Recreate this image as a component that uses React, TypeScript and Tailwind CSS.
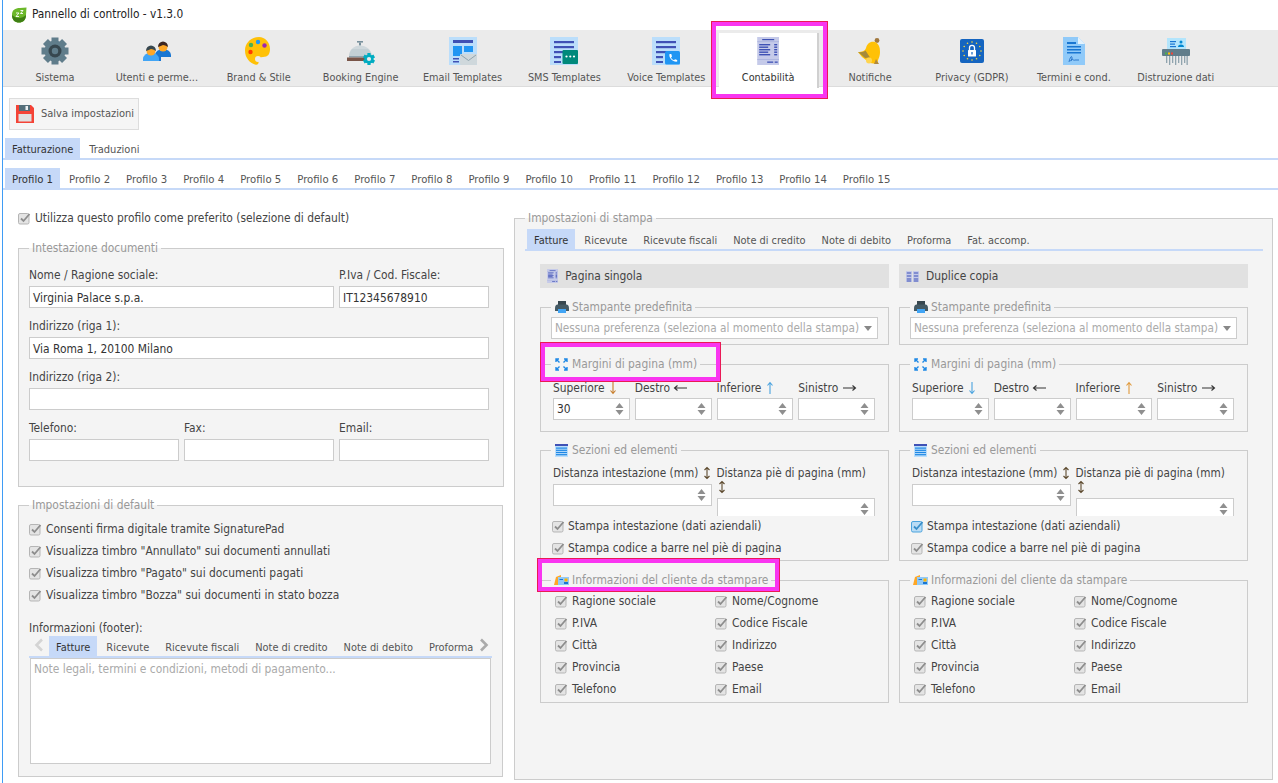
import React from "react";

const inputBox = "h-[22px] border border-[#ccc] bg-white px-[3px] leading-[22px] text-[#333]";

const Check: React.FC<{ blue?: boolean }> = ({ blue }) => (
  <svg width="13" height="13" viewBox="0 0 13 13" className="shrink-0">
    <rect x="0.5" y="1.5" width="10.5" height="10.5" rx="1.5" fill={blue ? "#b9dcf5" : "#e4e4e4"} stroke={blue ? "#4ba3dc" : "#b5b5b5"} />
    <path d="M3 6.5 L5.5 9 L11.5 2" fill="none" stroke={blue ? "#3a8fc9" : "#8d8d8d"} strokeWidth="1.8" />
  </svg>
);

const CheckRow: React.FC<{ label: string; blue?: boolean; gap?: string }> = ({ label, blue, gap = "gap-[4px]" }) => (
  <div className={`flex h-[22px] items-center ${gap} text-[#444]`}>
    <Check blue={blue} />
    <span className="whitespace-nowrap pt-[1px]">{label}</span>
  </div>
);

const Tabs: React.FC<{ items: string[]; className?: string }> = ({ items, className = "pl-[2px] text-[11px]" }) => (
  <div className={`flex h-[22px] gap-[2px] border-b-2 border-[#c6d9f8] ${className}`}>
    {items.map((t, i) => (
      <div key={t} className={`h-[20px] whitespace-nowrap px-[7px] pt-[1px] leading-[22px] ${i === 0 ? "bg-[#c6d9f8] text-[#333]" : "text-[#555]"}`}>
        {t}
      </div>
    ))}
  </div>
);

const Box: React.FC<{ title: string; icon?: React.ReactNode; className?: string; children: React.ReactNode }> = ({ title, icon, className = "", children }) => (
  <fieldset className={`min-w-0 border border-[#ccc] bg-[#f4f4f4] ${className}`}>
    <legend className="ml-[10px] flex h-[14px] items-center gap-[4px] px-[3px] leading-[14px] text-[#999]">
      {icon && <span className="ml-[1px] flex w-[13px] justify-center">{icon}</span>}
      <span className="whitespace-nowrap">{title}</span>
    </legend>
    {children}
  </fieldset>
);

const Spin: React.FC<{ value?: string }> = ({ value }) => (
  <div className={`${inputBox} flex items-center justify-between pr-[5px]`}>
    <span>{value}</span>
    <svg width="9" height="14" viewBox="0 0 9 14" className="shrink-0">
      <path d="M4.5 1 L8.5 6 H0.5 Z M0.5 8 H8.5 L4.5 13 Z" fill="#8f8f8f" />
    </svg>
  </div>
);

const Arrow: React.FC<{ dir: "down" | "up" | "left" | "right" | "both"; color: string }> = ({ dir, color }) => {
  const d = {
    down: "M5 1 V12 M2.5 9.5 L5 12.5 L7.5 9.5",
    up: "M5 13 V2 M2.5 4.5 L5 1.5 L7.5 4.5",
    left: "M14 7 H1.5 M4.5 4.5 L1.5 7 L4.5 9.5",
    right: "M1 7 H13.5 M10.5 4.5 L13.5 7 L10.5 9.5",
    both: "M5 2 V12 M2.5 4 L5 1.5 L7.5 4 M2.5 10 L5 12.5 L7.5 10",
  }[dir];
  const w = dir === "left" || dir === "right" ? 15 : 10;
  return (
    <svg width={w} height="14" viewBox={`0 0 ${w} 14`} className="inline-block align-[-3px]">
      <path d={d} fill="none" stroke={color} strokeWidth="1.1" />
    </svg>
  );
};

/* ---- toolbar icons ---- */
const gearTeeth = [0, 45, 90, 135, 180, 225, 270, 315];

const GearIcon = () => (
  <svg width="28" height="28" viewBox="0 0 28 28">
    {gearTeeth.map((a) => (
      <rect key={a} x="10.5" y="0.5" width="7" height="6" fill="#607d8b" transform={`rotate(${a} 14 14)`} />
    ))}
    <circle cx="14" cy="14" r="10.5" fill="#607d8b" />
    <circle cx="14" cy="14" r="6.5" fill="#37474f" />
    <circle cx="14" cy="14" r="3.2" fill="#607d8b" />
  </svg>
);

const UsersIcon = () => (
  <svg width="28" height="28" viewBox="0 0 28 28">
    <path d="M12 24 V18 a8 6 0 0 1 16 0 V20 H18 V24 Z" fill="#1976d2" />
    <circle cx="20" cy="10" r="4.5" fill="#ffa726" />
    <path d="M15 10 a5 5.5 0 0 1 10 0 q-3 -2 -5 -2 q-2 1 -5 2 Z" fill="#3e2723" />
    <path d="M0 24 V22 a8 6.5 0 0 1 16 0 V24 Z" fill="#42a5f5" />
    <circle cx="8" cy="14" r="4.5" fill="#ffa726" />
    <path d="M3 14 a5 5.5 0 0 1 10 0 q-3 -2 -5 -2 q-2 1 -5 2 Z" fill="#37474f" />
  </svg>
);

const PaletteIcon = () => (
  <svg width="28" height="28" viewBox="0 0 28 28">
    <path d="M14 0 C6 0 0 6 0 13.5 C0 21 5 26 10 27.5 C13 28.5 14 26 13.5 24 C13 21.5 15 20 18 20 C23 20 25 17 25 12 C25 5 20 0 14 0 Z" fill="#ffc107" />
    <circle cx="13" cy="5" r="2.2" fill="#2196f3" />
    <circle cx="6" cy="8" r="2.2" fill="#4caf50" />
    <circle cx="19.5" cy="8.5" r="2.2" fill="#9c27b0" />
    <circle cx="5.5" cy="15" r="2.2" fill="#ff3d00" />
    <circle cx="13" cy="22" r="3" fill="#ebebeb" />
  </svg>
);

const ClocheIcon = () => (
  <svg width="28" height="28" viewBox="0 0 28 28">
    <rect x="10" y="4" width="6" height="1.6" fill="#78909c" />
    <rect x="12" y="5.6" width="2" height="3" fill="#78909c" />
    <path d="M2 20 C2 12.5 7 8.5 13 8.5 C19 8.5 25 12.5 25 20 Z" fill="#cfd8dc" />
    <path d="M2 20 C2 17 3 14 5 12 H21 C23 14 25 17 25 20 Z" fill="#b8c6cc" opacity="0.5" />
    <rect x="2" y="19" width="19" height="1.5" fill="#90a4ae" />
    <rect x="0" y="20.5" width="19" height="3.5" fill="#795548" />
    <g transform="translate(22 22)">
      {[0, 60, 120].map((a) => (
        <rect key={a} x="-1.6" y="-6" width="3.2" height="12" fill="#00acc1" transform={`rotate(${a})`} />
      ))}
      <circle r="4.6" fill="#00acc1" />
      <circle r="2.1" fill="#ebebeb" />
    </g>
  </svg>
);

const TemplateBase: React.FC<{ children?: React.ReactNode; blocks?: boolean }> = ({ children, blocks }) => (
  <svg width="28" height="28" viewBox="0 0 28 28">
    <rect x="0" y="0" width="28" height="28" fill="#bbdefb" />
    {blocks ? (
      <>
        <rect x="4" y="3" width="20" height="3" fill="#3f51b5" />
        <rect x="4" y="9" width="9" height="10" fill="#2196f3" />
        <rect x="15" y="9" width="9" height="6" fill="#2196f3" />
        <rect x="4" y="21" width="6" height="1.5" fill="#3f51b5" />
        <rect x="4" y="24" width="6" height="1.5" fill="#3f51b5" />
      </>
    ) : (
      <>
        <rect x="4" y="4" width="20" height="2.2" fill="#3f51b5" />
        <rect x="4" y="9" width="20" height="2.2" fill="#3f51b5" />
        <rect x="4" y="14" width="12" height="2.2" fill="#3f51b5" />
        <rect x="4" y="19" width="7" height="2.2" fill="#3f51b5" />
        <rect x="4" y="24" width="7" height="2" fill="#3f51b5" />
      </>
    )}
    {children}
  </svg>
);

const EmailIcon = () => (
  <TemplateBase blocks>
    <rect x="11" y="17" width="17" height="11" rx="1" fill="#cfd8dc" />
    <path d="M12 18 L19.5 23.5 L27 18" fill="none" stroke="#90a4ae" strokeWidth="1" />
  </TemplateBase>
);

const SmsIcon = () => (
  <TemplateBase>
    <rect x="12.5" y="13" width="15.5" height="14" rx="1" fill="#00897b" />
    <circle cx="16.5" cy="19.5" r="1.1" fill="#fff" />
    <circle cx="20.3" cy="19.5" r="1.1" fill="#fff" />
    <circle cx="24" cy="19.5" r="1.1" fill="#fff" />
  </TemplateBase>
);

const VoiceIcon = () => (
  <TemplateBase>
    <rect x="13" y="14" width="15" height="13.5" rx="1.5" fill="#2196f3" />
    <path d="M17.5 17 L19.3 17 L20 19.5 L19 20.4 C19.7 21.8 20.6 22.6 22 23.2 L23 22.2 L25.2 23 L25.2 24.6 C21 25.2 16.5 21 17.5 17 Z" fill="#fff" />
  </TemplateBase>
);

const LedgerIcon: React.FC<{ size?: number }> = ({ size = 28 }) => (
  <svg width={size * 0.8} height={size} viewBox="0 0 22 28">
    <rect x="0" y="0" width="22" height="28" fill="#c5cae9" />
    <rect x="5" y="2" width="12" height="1.2" fill="#3f51b5" />
    <rect x="0" y="4.5" width="22" height="0.6" fill="#9fa8da" />
    {[7, 9.5, 12, 14.5, 17].map((y, i) => (
      <React.Fragment key={y}>
        <rect x="2" y={y} width={i % 2 ? 9 : 11} height="1.4" fill="#3f51b5" />
        <rect x="17" y={y} width="3" height="1.4" fill="#3f51b5" />
      </React.Fragment>
    ))}
    <rect x="0" y="22" width="22" height="0.6" fill="#9fa8da" />
    <rect x="10" y="24.5" width="6" height="1.3" fill="#3f51b5" />
    <rect x="17.5" y="24.5" width="3" height="1.3" fill="#3f51b5" />
  </svg>
);

const BellIcon = () => (
  <svg width="28" height="28" viewBox="0 0 28 28">
    <circle cx="21" cy="3.5" r="2.4" fill="#a1783f" />
    <path d="M19 5 C14 4 11 7 10 11 C9 14 6 15 2 15 L6 20 L14 26 L21 27 C22 22 24 20 24 15 C24 10 23 7 19 5 Z" fill="#ffc107" />
    <path d="M2 15 C5 15.5 8 15 9.5 13.5 L14 20.5 L9 21 Z" fill="#a68a3c" />
    <path d="M18 27 L20 22 L23 27 Z" fill="#b28a3c" />
    <circle cx="13" cy="23.5" r="3" fill="#ffd54f" />
  </svg>
);

const PrivacyIcon = () => {
  const stars = Array.from({ length: 12 }, (_, i) => (i * Math.PI) / 6);
  return (
    <svg width="24" height="24" viewBox="0 0 24 24">
      <rect width="24" height="24" rx="2" fill="#1565c0" />
      {stars.map((a) => (
        <circle key={a} cx={12 + 9 * Math.cos(a)} cy={12 + 9 * Math.sin(a)} r="0.8" fill="#fdd835" />
      ))}
      <path d="M9.5 11 V8.8 a2.5 2.5 0 0 1 5 0 V11" fill="none" stroke="#fff" strokeWidth="1.3" />
      <rect x="8" y="11" width="8" height="6.5" rx="0.5" fill="#fff" />
      <rect x="11.4" y="13" width="1.2" height="2.5" fill="#1565c0" />
    </svg>
  );
};

const TermsIcon = () => (
  <svg width="22" height="28" viewBox="0 0 22 28">
    <path d="M0 0 H15 L22 7 V28 H0 Z" fill="#90caf9" />
    <path d="M15 0 L22 7 H15 Z" fill="#e3f2fd" />
    <rect x="4" y="5" width="9" height="2" fill="#1976d2" />
    {[9, 12, 15].map((y) => (
      <rect key={y} x="4" y={y} width="14" height="1.5" fill="#1976d2" />
    ))}
    <path d="M6 25 C7 20 9 18 9 21 C9 24 7 25 8 23 C10 21 10 24 12 23 L16 23" fill="none" stroke="#1565c0" strokeWidth="0.8" />
  </svg>
);

const ShredderIcon = () => (
  <svg width="28" height="28" viewBox="0 0 28 28">
    <rect x="5" y="1" width="19" height="12" fill="#b3e5fc" />
    <rect x="8" y="4" width="6" height="1.2" fill="#1976d2" />
    <rect x="8" y="6.5" width="5" height="1.2" fill="#1976d2" />
    <rect x="8" y="9" width="6" height="1.2" fill="#1976d2" />
    <circle cx="19" cy="5" r="1.5" fill="#0288d1" />
    <path d="M16 10 a3 2.5 0 0 1 6 0 Z" fill="#0288d1" />
    <rect x="0" y="12" width="28" height="7" rx="1" fill="#607d8b" />
    <rect x="3" y="15.5" width="2" height="2" fill="#4caf50" />
    <rect x="6" y="15.5" width="2" height="2" fill="#ffc107" />
    <rect x="9" y="15.5" width="2" height="2" fill="#f44336" />
    {[4, 7, 10, 13, 16, 19, 22, 24.5].map((x, i) => (
      <rect key={x} x={x} y="19" width="1.3" height={i % 2 ? 9 : 7} fill="#90a4ae" />
    ))}
  </svg>
);

/* ---- small legend icons ---- */
const PrinterIcon = () => (
  <svg width="14" height="13" viewBox="0 0 14 13" className="shrink-0">
    <rect x="3" y="0" width="8" height="4" fill="#37474f" />
    <path d="M0 8 C0 4.5 1 3.5 3 3.5 H11 C13 3.5 14 4.5 14 8 V10 H0 Z" fill="#455a64" />
    <rect x="3" y="8" width="8" height="4" fill="#42a5f5" />
  </svg>
);

const ExpandIcon = () => (
  <svg width="13" height="13" viewBox="0 0 13 13" fill="none" stroke="#1e88e5" strokeWidth="1.4" className="shrink-0">
    <path d="M1 4 V1 H4 M1 1 L4.5 4.5 M9 1 H12 V4 M12 1 L8.5 4.5 M1 9 V12 H4 M1 12 L4.5 8.5 M9 12 H12 V9 M12 12 L8.5 8.5" />
  </svg>
);

const RowsIcon = () => (
  <svg width="13" height="13" viewBox="0 0 13 13" className="shrink-0">
    <rect width="13" height="13" fill="#bbdefb" />
    <rect y="0" width="13" height="2" fill="#3f51b5" />
    {[3.5, 5.7, 7.9, 10.1].map((y) => (
      <rect key={y} x="1" y={y} width="11" height="1.2" fill="#1e88e5" />
    ))}
  </svg>
);

const CardIcon = () => (
  <svg width="15" height="10" viewBox="0 0 15 10" className="shrink-0">
    <path d="M0 10 L2 2 L7 0 V10 Z" fill="#ffa726" />
    <rect x="4" y="2" width="11" height="8" fill="#90caf9" />
    <rect x="5.5" y="4" width="3.5" height="1" fill="#1976d2" />
    <rect x="10.5" y="3.5" width="3" height="3" fill="#ffb300" />
    <rect x="10" y="7" width="4" height="2" fill="#1976d2" />
  </svg>
);

const DoubleIcon = () => (
  <svg width="13" height="13" viewBox="0 0 13 13">
    <rect x="0" y="1" width="6" height="11" fill="#c5cae9" />
    <rect x="7" y="1" width="6" height="11" fill="#c5cae9" />
    {[2.5, 5.5, 8.5, 10.5].map((y) => (
      <React.Fragment key={y}>
        <rect x="0.8" y={y} width="4.4" height="1" fill="#3f51b5" />
        <rect x="7.8" y={y} width="4.4" height="1" fill="#3f51b5" />
      </React.Fragment>
    ))}
  </svg>
);

const tools: { label: string; icon: React.ReactNode }[] = [
  { label: "Sistema", icon: <GearIcon /> },
  { label: "Utenti e perme...", icon: <UsersIcon /> },
  { label: "Brand & Stile", icon: <PaletteIcon /> },
  { label: "Booking Engine", icon: <ClocheIcon /> },
  { label: "Email Templates", icon: <EmailIcon /> },
  { label: "SMS Templates", icon: <SmsIcon /> },
  { label: "Voice Templates", icon: <VoiceIcon /> },
  { label: "Contabilità", icon: <LedgerIcon /> },
  { label: "Notifiche", icon: <BellIcon /> },
  { label: "Privacy (GDPR)", icon: <PrivacyIcon /> },
  { label: "Termini e cond.", icon: <TermsIcon /> },
  { label: "Distruzione dati", icon: <ShredderIcon /> },
];

const profiles = Array.from({ length: 15 }, (_, i) => `Profilo ${i + 1}`);
const docTabs = ["Fatture", "Ricevute", "Ricevute fiscali", "Note di credito", "Note di debito", "Proforma"];
const clientFields = ["Ragione sociale", "Nome/Cognome", "P.IVA", "Codice Fiscale", "Città", "Indirizzo", "Provincia", "Paese", "Telefono", "Email"];

const Field: React.FC<{ label: string; value?: string; className?: string }> = ({ label, value, className = "" }) => (
  <div className={className}>
    <div className="mb-[5px] h-[14px] whitespace-nowrap leading-[16px] text-[#444]">{label}</div>
    <div className={inputBox}>{value}</div>
  </div>
);

type PrintProps = {
  title: string;
  icon: React.ReactNode;
  top?: string;
  downColor: string;
  upColor: string;
  blueHeader?: boolean;
};

const PrintColumn: React.FC<PrintProps> = ({ title, icon, top, downColor, upColor, blueHeader }) => (
  <div className="w-[349px] shrink-0">
    <div className="flex h-[24px] items-center gap-[7px] bg-[#e1e1e1] pl-[7px] text-[#444]">
      {icon}
      <span className="pt-[1px]">{title}</span>
    </div>

    <Box title="Stampante predefinita" icon={<PrinterIcon />} className="mt-[12px] h-[45px]">
      <div className="mx-[10px] mt-[3px] flex h-[22px] items-center justify-between border border-[#ccc] bg-white pl-[3px] pr-[5px] text-[11.7px] text-[#aaa]">
        <span className="whitespace-nowrap pt-[1px]">Nessuna preferenza (seleziona al momento della stampa)</span>
        <svg width="8" height="5" viewBox="0 0 8 5"><path d="M0 0 H8 L4 5 Z" fill="#888" /></svg>
      </div>
    </Box>

    <Box title="Margini di pagina (mm)" icon={<ExpandIcon />} className="mt-[12px] h-[75px]">
      <div className="grid grid-cols-4 gap-x-[5px] pl-[12px] pr-[13px] pt-[9px]">
        {([
          ["Superiore", "down", downColor],
          ["Destro", "left", "#333"],
          ["Inferiore", "up", upColor],
          ["Sinistro", "right", "#333"],
        ] as const).map(([label, dir, color], i) => (
          <div key={label}>
            <div className="mb-[4px] h-[14px] whitespace-nowrap leading-[16px] text-[#444]">
              {label} <Arrow dir={dir} color={color} />
            </div>
            <Spin value={i === 0 ? top : undefined} />
          </div>
        ))}
      </div>
    </Box>

    <Box title="Sezioni ed elementi" icon={<RowsIcon />} className="mt-[11px] h-[118px]">
      <div className="grid h-[59px] grid-cols-2 gap-x-[5px] overflow-hidden pl-[12px] pr-[13px] pt-[9px] text-[11.7px]">
        <div>
          <div className="mb-[4px] h-[14px] whitespace-nowrap leading-[14px] text-[#444]">
            Distanza intestazione (mm) <Arrow dir="both" color="#5d4a2e" />
          </div>
          <Spin />
        </div>
        <div>
          <div className="mb-[4px] leading-[14px] text-[#444]">
            Distanza piè di pagina (mm) <Arrow dir="both" color="#5d4a2e" />
          </div>
          <Spin />
        </div>
      </div>
      <div className="-mt-[1px] pl-[11px]">
        <CheckRow gap="gap-[3px]" label="Stampa intestazione (dati aziendali)" blue={blueHeader} />
        <CheckRow gap="gap-[3px]" label="Stampa codice a barre nel piè di pagina" />
      </div>
    </Box>

    <Box title="Informazioni del cliente da stampare" icon={<CardIcon />} className="mt-[12px] h-[130px]">
      <div className="grid grid-cols-[160px_1fr] pl-[14px] pt-[3px]">
        {clientFields.map((f) => (
          <CheckRow key={f} label={f} />
        ))}
      </div>
    </Box>
  </div>
);

export default function App() {
  return (
    <div className="relative h-[783px] w-[1278px] overflow-hidden bg-white pl-[3px] font-['DejaVu_Sans_Condensed','DejaVu_Sans',sans-serif] text-[11.9px]">
      <div className="absolute bottom-0 left-[2px] top-0 w-[1px] bg-[#3f9cf5]" />

      {/* title bar */}
      <div className="flex h-[30px] items-center gap-[5px] pl-[8px] text-[11.8px] text-[#222]">
        <svg width="16" height="16" viewBox="0 0 16 16">
          <path d="M1 8 C1 3 4 1 9 1 L15.5 0.5 L15 8 C15 13 12 15.5 8 15.5 C4 15.5 1 13 1 8 Z" fill="#6cb82a" />
          <path d="M1 8 C5 12 11 12 15 8 C15 13 12 15.5 8 15.5 C4 15.5 1 13 1 8 Z" fill="#3f7f14" />
          <path d="M5 6 H8 L5 9.5 H8 M9.5 3.5 H12 L9.5 6.5 H12" fill="none" stroke="#fff" strokeWidth="0.9" />
        </svg>
        <span>Pannello di controllo - v1.3.0</span>
      </div>

      {/* toolbar */}
      <div className="flex h-[57px] border-b border-[#dcdcdc] bg-[#ebebeb] pl-[1px] text-[10.8px]">
        {tools.map((t) => {
          const active = t.label === "Contabilità";
          return (
            <div
              key={t.label}
              className={`flex shrink-0 flex-col items-center ${active ? "ml-[2px] mt-[3px] h-[55px] w-[99.9px] border-r-2 border-[#d0d0d0] bg-white pt-[4px] text-[#333]" : "w-[101.9px] pt-[7px] text-[#555]"}`}
            >
              <div className="flex h-[28px] items-center justify-center">{t.icon}</div>
              <div className="mt-[6px] h-[14px] whitespace-nowrap leading-[14px]">{t.label}</div>
            </div>
          );
        })}
      </div>

      {/* save */}
      <div className="ml-[6px] mt-[11px] flex h-[32px] w-[130px] items-center gap-[7px] border border-[#ddd] bg-[#f5f5f5] pl-[6px] text-[11px] text-[#555]">
        <svg width="18" height="18" viewBox="0 0 18 18" className="shrink-0">
          <path d="M0 0 H15 L18 3 V18 H0 Z" fill="#f44336" />
          <rect x="3" y="0" width="11" height="6" fill="#546e7a" />
          <rect x="9.5" y="1" width="2.5" height="4" fill="#eceff1" />
          <rect x="2.5" y="9" width="13" height="7.5" fill="#e0e0e0" />
        </svg>
        <span className="whitespace-nowrap pt-[1px]">Salva impostazioni</span>
      </div>

      <Tabs items={["Fatturazione", "Traduzioni"]} className="mt-[8px] pl-[2px] text-[11px]" />
      <Tabs items={profiles} className="mt-[8px] pl-[2px] text-[11.25px]" />

      {/* body */}
      <div className="flex items-start pl-[15px]">
        <div className="w-[486px] shrink-0">
          <div className="mt-[21px] flex h-[14px] items-center gap-[4px] text-[#444]">
            <Check />
            <span className="pt-[1px]">Utilizza questo profilo come preferito (selezione di default)</span>
          </div>

          <Box title="Intestazione documenti" className="mt-[16px] h-[246px]">
            <div className="grid grid-cols-3 gap-x-[5px] gap-y-[10px] pl-[10px] pr-[14px] pt-[12px]">
              <Field label="Nome / Ragione sociale:" value="Virginia Palace s.p.a." className="col-span-2" />
              <Field label="P.Iva / Cod. Fiscale:" value="IT12345678910" />
              <Field label="Indirizzo (riga 1):" value="Via Roma 1, 20100 Milano" className="col-span-3" />
              <Field label="Indirizzo (riga 2):" className="col-span-3" />
              <Field label="Telefono:" />
              <Field label="Fax:" />
              <Field label="Email:" />
            </div>
          </Box>

          <Box title="Impostazioni di default" className="mt-[11px] h-[279px] w-[485px]">
            <div className="pl-[10px] pt-[6px]">
              <CheckRow label="Consenti firma digitale tramite SignaturePad" />
              <CheckRow label={'Visualizza timbro "Annullato" sui documenti annullati'} />
              <CheckRow label={'Visualizza timbro "Pagato" sui documenti pagati'} />
              <CheckRow label={'Visualizza timbro "Bozza" sui documenti in stato bozza'} />
            </div>
            <div className="ml-[10px] mt-[14px] h-[14px] leading-[16px] text-[#444]">Informazioni (footer):</div>
            <div className="relative ml-[10px] mt-[2px] w-[463px]">
              <Tabs items={docTabs} className="pl-[20px] text-[10.9px]" />
              <svg width="10" height="14" viewBox="0 0 10 14" className="absolute left-[5px] top-[2px]">
                <path d="M8 1.5 L2.5 7 L8 12.5" fill="none" stroke="#d4d4d4" strokeWidth="2.6" />
              </svg>
              <svg width="10" height="14" viewBox="0 0 10 14" className="absolute right-[3px] top-[2px]">
                <path d="M2 1.5 L7.5 7 L2 12.5" fill="none" stroke="#aaa" strokeWidth="2.6" />
              </svg>
            </div>
            <div className="ml-[11px] h-[106px] w-[461px] border border-[#ccc] bg-white px-[3px] pt-[3px] leading-[14px] text-[#aaa]">
              Note legali, termini e condizioni, metodi di pagamento...
            </div>
          </Box>
        </div>

        <Box title="Impostazioni di stampa" className="ml-[10px] mt-[21px] h-[569px] w-[759px] shrink-0">
          <Tabs
            items={["Fatture", "Ricevute", "Ricevute fiscali", "Note di credito", "Note di debito", "Proforma", "Fat. accomp."]}
            className="ml-[10px] mr-[9px] mt-[4px] pl-[2px] text-[10.9px]"
          />
          <div className="ml-[25px] mt-[13px] flex gap-[10px]">
            <PrintColumn title="Pagina singola" icon={<LedgerIcon size={14} />} top="30" downColor="#c77d2b" upColor="#4aa3df" />
            <PrintColumn title="Duplice copia" icon={<DoubleIcon />} downColor="#4aa3df" upColor="#e09a3c" blueHeader />
          </div>
        </Box>
      </div>

      {/* pink annotation boxes */}
      <div className="absolute left-[712px] top-[22px] h-[76px] w-[115px] border-4 border-[#f935f0] outline outline-1 outline-[#ea1a55]" />
      <div className="absolute left-[541px] top-[343px] h-[38px] w-[179px] border-4 border-[#f935f0] outline outline-1 outline-[#ea1a55]" />
      <div className="absolute left-[538px] top-[559px] h-[32px] w-[241px] border-4 border-[#f935f0] outline outline-1 outline-[#ea1a55]" />
    </div>
  );
}
